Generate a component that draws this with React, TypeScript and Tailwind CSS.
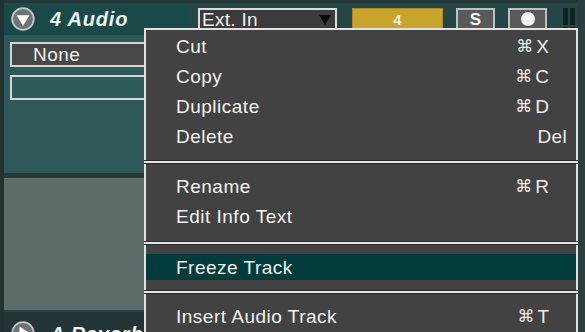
import React from "react";

const font = { fontFamily: '"Liberation Sans", Arial, "DejaVu Sans", sans-serif' };

function CircleIcon({ dir }: { dir: "down" | "right" }) {
  return (
    <svg width="24" height="24" viewBox="0 0 24 24">
      <circle cx="12" cy="12" r="10.8" fill="#6e7373" stroke="#c4c8c8" strokeWidth="1.8" />
      {dir === "down" ? (
        <path d="M5.6 8.2 L18.4 8.2 L12 19 Z" fill="#ffffff" />
      ) : (
        <path d="M8.5 5.5 L18.5 12 L8.5 18.5 Z" fill="#ffffff" />
      )}
    </svg>
  );
}

type Item = { label: string; sc?: string; key?: string; hl?: boolean };

function Row({ item, h }: { item: Item; h: number }) {
  return (
    <div
      className={`flex items-center justify-between pl-[30px] ${item.hl ? "bg-[#023b3b]" : ""}`}
      style={{ height: h }}
    >
      <span className="text-[19px] tracking-[0.5px] text-[#f2f2f2] leading-none">{item.label}</span>
      {item.key ? (
        <span className="flex items-center text-[19px] text-[#ececec] leading-none pr-[27px]">
          <span className="text-[17px] mr-[3px]" style={{ fontFamily: '"DejaVu Sans", sans-serif' }}>⌘</span>
          <span>{item.key}</span>
        </span>
      ) : item.sc ? (
        <span className="text-[19px] tracking-[0.3px] text-[#ececec] leading-none pr-[9px]">{item.sc}</span>
      ) : null}
    </div>
  );
}

function Sep() {
  return (
    <div className="flex flex-col -mx-[2px]">
      <div className="h-[1px] bg-[#2c2c2c]" />
      <div className="h-[2px] bg-[#e4e4e4]" />
      <div className="h-[1px] bg-[#2c2c2c]" />
    </div>
  );
}

export default function App() {
  return (
    <div className="w-[585px] h-[332px] relative overflow-hidden bg-[#253737]" style={font}>
      <div className="flex h-full">
        <div className="w-[4px] bg-[#223232]" />
        <div className="flex-1 flex flex-col">
          {/* header */}
          <div className="mt-[3px] h-[32px] shrink-0 flex">
            <div className="w-[186px] bg-[#1a4949] flex items-center">
              <div className="ml-[7px]">
                <CircleIcon dir="down" />
              </div>
              <span className="ml-[15px] text-[20px] font-bold italic tracking-[0.8px] text-[#eef2f2] leading-none">
                4 Audio
              </span>
            </div>
            <div className="flex-1 bg-[#254646] flex items-start pt-[5px]">
              <div className="ml-[8px] w-[139px] h-[23px] bg-[#3b3b3b] border-2 border-[#dcdcdc] flex items-center justify-between pl-[2px] pr-[4px]">
                <span className="text-[19px] text-[#f0f0f0] leading-none tracking-[0.3px]">Ext. In</span>
                <svg width="12" height="10" viewBox="0 0 12 10">
                  <path d="M0 0 L12 0 L6 10 Z" fill="#0a0a0a" />
                </svg>
              </div>
              <div className="ml-[15px] w-[91px] h-[22px] bg-[#c9a42c] flex items-center justify-center border border-[#a98a24]">
                <span className="text-[15px] font-bold text-[#f4f0e0] leading-none">4</span>
              </div>
              <div className="ml-[13px] w-[39px] h-[22px] bg-[#595959] border-2 border-[#b9c2c2] flex items-center justify-center">
                <span className="text-[17px] font-bold text-white leading-none">S</span>
              </div>
              <div className="ml-[13px] w-[39px] h-[22px] bg-[#595959] border-2 border-[#b9c2c2] flex items-center justify-center">
                <div className="w-[14px] h-[14px] rounded-full bg-[#f4f4f4]" />
              </div>
              <div className="ml-[16px] flex gap-[2px]">
                <div className="flex flex-col gap-[2px]">
                  <div className="w-[5px] h-[17px] bg-[#0f2323]" />
                  <div className="w-[5px] h-[5px] bg-[#0f2323]" />
                </div>
                <div className="flex flex-col gap-[2px]">
                  <div className="w-[5px] h-[17px] bg-[#0f2323]" />
                  <div className="w-[5px] h-[5px] bg-[#0f2323]" />
                </div>
              </div>
            </div>
          </div>
          {/* body */}
          <div className="h-[138px] shrink-0 bg-[#2f5858] flex flex-col pl-[6px]">
            <div className="mt-[7px] w-[190px] h-[25px] bg-[#474747] border-2 border-[#cfd6d6] flex items-center pl-[21px]">
              <span className="text-[19px] tracking-[0.5px] text-[#f2f2f2] leading-none">None</span>
            </div>
            <div className="mt-[8px] w-[190px] h-[25px] bg-[#2f5a5a] border-2 border-[#cfd6d6]" />
          </div>
          <div className="h-[5px] shrink-0 bg-[#243939]" />
          <div className="h-[132px] shrink-0 bg-[#5e6b6b] border-t border-[#667373]" />
          <div className="flex-1 min-h-0 overflow-hidden bg-[#223434] border-t-2 border-[#2c4040] flex items-start pt-[9px]">
            <div className="ml-[7px] shrink-0">
              <CircleIcon dir="right" />
            </div>
            <span className="ml-[15px] mt-[3px] text-[20px] font-bold italic tracking-[0.8px] text-[#eef2f2] leading-none">
              A Reverb
            </span>
          </div>
        </div>
        <div className="w-[7px] bg-[#2a3e3e]" />
      </div>

      {/* context menu */}
      <div className="absolute left-[144px] top-[28px] w-[434px] h-[330px] bg-[#424242] border-2 border-[#e2e2e2] flex flex-col">
        <div className="pt-[1px] pb-[9px]">
          <Row item={{ label: "Cut", key: "X" }} h={30} />
          <Row item={{ label: "Copy", key: "C" }} h={30} />
          <Row item={{ label: "Duplicate", key: "D" }} h={30} />
          <Row item={{ label: "Delete", sc: "Del" }} h={30} />
        </div>
        <Sep />
        <div className="pt-[7px] pb-[10px]">
          <Row item={{ label: "Rename", key: "R" }} h={30} />
          <Row item={{ label: "Edit Info Text" }} h={30} />
        </div>
        <Sep />
        <div className="pt-[9px] pb-[10px]">
          <Row item={{ label: "Freeze Track", hl: true }} h={26} />
        </div>
        <Sep />
        <div className="pt-[7px]">
          <Row item={{ label: "Insert Audio Track", key: "T" }} h={30} />
        </div>
      </div>
    </div>
  );
}
